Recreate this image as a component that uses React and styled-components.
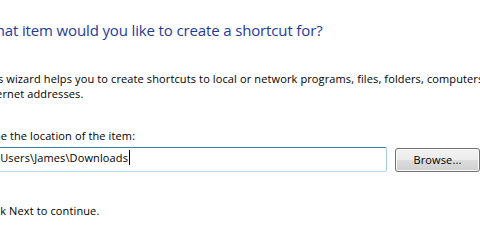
import React from "react";
import styled, { createGlobalStyle } from "styled-components";

const Global = createGlobalStyle`
  html, body { margin: 0; padding: 0; background: #ffffff; overflow: hidden; }
  body { width: 480px; height: 249px; }
`;

const Page = styled.div`
  margin-left: -18px;
  padding-top: 20px;
  font-family: "Open Sans", "Noto Sans", sans-serif;
  font-size: 11px;
  line-height: 15px;
  letter-spacing: 0.12px;
  color: #000000;
  white-space: nowrap;
`;

const Heading = styled.h1`
  margin: 0;
  font-weight: 400;
  font-size: 15px;
  line-height: 20px;
  letter-spacing: -0.14px;
  color: #1e3a9a;
`;

const Para = styled.p`
  margin: ${(p) => p.$top}px 0 0;
`;

const Row = styled.div`
  display: flex;
  align-items: center;
  gap: 8px;
  margin-top: 4px;
`;

const TextBox = styled.div`
  flex: 1;
  box-sizing: border-box;
  height: 25px;
  border: 1px solid #b7d9ed;
  border-top-color: #3d7bad;
  border-right-color: #a4c9e3;
  border-radius: 2px;
  padding: 2px 3px 0;
  display: flex;
  align-items: flex-start;
`;

const Caret = styled.span`
  display: inline-block;
  width: 1px;
  height: 15px;
  background: #000000;
  margin-left: 1px;
`;

const Button = styled.div`
  box-sizing: border-box;
  width: 85px;
  height: 24px;
  border: 1px solid #707070;
  border-radius: 3px;
  background: linear-gradient(#f2f2f2 0%, #ebebeb 50%, #dddddd 50%, #cfcfcf 100%);
  box-shadow: inset 0 0 0 1px #fcfcfc;
  display: flex;
  align-items: center;
  justify-content: center;
`;

export default function App() {
  return (
    <>
      <Global />
      <Page>
        <Heading>What item would you like to create a shortcut for?</Heading>
        <Para $top={31}>
          This wizard helps you to create shortcuts to local or network programs, files, folders, computers, or
          <br />
          Internet addresses.
        </Para>
        <Para $top={27}>Type the location of the item:</Para>
        <Row>
          <TextBox>
            C:\Users\James\Downloads
            <Caret />
          </TextBox>
          <Button>Browse...</Button>
        </Row>
        <Para $top={31}>Click Next to continue.</Para>
      </Page>
    </>
  );
}
